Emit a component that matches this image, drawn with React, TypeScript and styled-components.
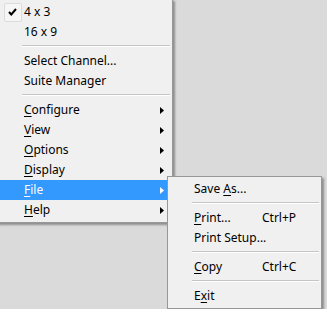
import styled, {createGlobalStyle} from "styled-components";
import {ReactNode} from "react";

const Global = createGlobalStyle`
  html, body {
    margin: 0;
    padding: 0;
    background: #dadada;
  }
  body {
    font-family: "Noto Sans", "Open Sans", sans-serif;
    font-size: 12px;
    color: #000;
  }
`;

type Item = {
    label: ReactNode
    shortcut?: string
    checked?: boolean
    arrow?: boolean
    active?: boolean
    sep?: boolean
}

const Mn = ({children}: { children: string }) => <u>{children}</u>

const mainItems: Item[] = [
    {label: "4 x 3", checked: true},
    {label: "16 x 9"},
    {sep: true, label: ""},
    {label: "Select Channel..."},
    {label: "Suite Manager"},
    {sep: true, label: ""},
    {label: <><Mn>C</Mn>onfigure</>, arrow: true},
    {label: <><Mn>V</Mn>iew</>, arrow: true},
    {label: <><Mn>O</Mn>ptions</>, arrow: true},
    {label: <><Mn>D</Mn>isplay</>, arrow: true},
    {label: <><Mn>F</Mn>ile</>, arrow: true, active: true},
    {label: <><Mn>H</Mn>elp</>, arrow: true},
]

const fileItems: Item[] = [
    {label: <>Save <Mn>A</Mn>s...</>},
    {sep: true, label: ""},
    {label: <><Mn>P</Mn>rint...</>, shortcut: "Ctrl+P"},
    {label: "Print Setup..."},
    {sep: true, label: ""},
    {label: <><Mn>C</Mn>opy</>, shortcut: "Ctrl+C"},
    {sep: true, label: ""},
    {label: <>E<Mn>x</Mn>it</>},
]

const Arrow = () => (
    <svg width="4" height="7" viewBox="0 0 4 7">
        <path d="M0 0 L4 3.5 L0 7 Z" fill="currentColor"/>
    </svg>
)

const Check = () => (
    <svg width="9" height="8" viewBox="0 0 9 8">
        <path d="M1 4 L3.3 6.5 L8 1" fill="none" stroke="#000" strokeWidth="2"/>
    </svg>
)

const renderItems = (items: Item[]) => items.map((it, i) =>
    it.sep
        ? <Separator key={i}/>
        : <Row key={i} $active={it.active}>
            <CheckCell>{it.checked && <CheckBox><Check/></CheckBox>}</CheckCell>
            <Label>{it.label}</Label>
            <Shortcut>{it.shortcut}</Shortcut>
            <ArrowCell>{it.arrow && <Arrow/>}</ArrowCell>
        </Row>
)

export default function App() {
    return <>
        <Global/>
        <Screen>
            <MainMenu>{renderItems(mainItems)}</MainMenu>
            <SubMenu>{renderItems(fileItems)}</SubMenu>
        </Screen>
    </>
}

const Screen = styled.div`
  position: relative;
  width: 327px;
  height: 309px;
  overflow: hidden;
  background: #dadada;
`;

const Menu = styled.div`
  background: #f0f0f0;
  border: 1px solid #979797;
  box-shadow: 2px 2px 2px rgba(0, 0, 0, 0.35);
  padding: 2px;
  display: flex;
  flex-direction: column;
`;

const MainMenu = styled(Menu)`
  margin: -1px 0 0 -3px;
  width: 170px;
`;

// the File submenu lies over the main menu's right edge
const SubMenu = styled(Menu)`
  position: absolute;
  left: 167px;
  top: 176px;
  width: 149px;
`;

const Row = styled.div<{ $active?: boolean }>`
  display: flex;
  align-items: center;
  height: 20px;
  background: ${p => p.$active ? "#3399ff" : "transparent"};
  color: ${p => p.$active ? "#fff" : "#000"};
  white-space: nowrap;
`;

const CheckCell = styled.div`
  width: 24px;
  height: 20px;
  display: flex;
  align-items: center;
  justify-content: center;
  flex-shrink: 0;
`;

const CheckBox = styled.div`
  width: 18px;
  height: 19px;
  margin-left: 1px;
  display: flex;
  align-items: center;
  justify-content: center;
  border: 1px solid #dcdcdc;
  box-sizing: border-box;
  border-radius: 2px;
  background: #f6f6f6;
`;

const Label = styled.span`
  flex: 1;
  line-height: 20px;

  u {
    text-decoration: underline;
    text-underline-offset: 2px;
  }
`;

const Shortcut = styled.span`
  width: 43px;
  flex-shrink: 0;
  line-height: 20px;
`;

const ArrowCell = styled.div`
  width: 14px;
  flex-shrink: 0;
  box-sizing: border-box;
  padding-left: 4px;
  display: flex;
  align-items: center;
`;

const Separator = styled.div`
  height: 9px;
  margin-left: 22px;
  position: relative;

  &::before {
    content: "";
    position: absolute;
    left: 0;
    right: 0;
    top: 3px;
    height: 1px;
    background: #c5c5c5;
    border-bottom: 1px solid #ffffff;
  }
`;
